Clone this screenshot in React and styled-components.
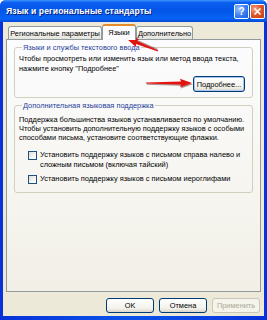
import React from "react";
import styled, { createGlobalStyle, css } from "styled-components";

const GlobalStyle = createGlobalStyle`
  html, body {
    margin: 0;
    padding: 0;
  }
  body {
    width: 267px;
    height: 320px;
    overflow: hidden;
    background: #fff;
    font-family: "Liberation Sans", Arial, sans-serif;
  }
`;

const Window = styled.div`
  position: relative;
  box-sizing: border-box;
  width: 267px;
  height: 320px;
  display: flex;
  flex-direction: column;
  padding: 0 3px 4px 3px;
  background: linear-gradient(90deg, #0831d9 0%, #0a4ee8 40%, #0a4ee8 60%, #0831d9 100%);
  border-radius: 6px 6px 0 0;
`;

const TitleBar = styled.div`
  height: 22px;
  margin: 0 -3px;
  padding: 0 2px 0 6px;
  display: flex;
  align-items: center;
  border-radius: 6px 6px 0 0;
  background: linear-gradient(
    180deg,
    #3d95ff 0%,
    #0a5ef0 12%,
    #0355e6 45%,
    #0663f5 85%,
    #0548d8 100%
  );
`;

const Title = styled.div`
  flex: 1;
  color: #fff;
  font-weight: bold;
  font-size: 8.6px;
  letter-spacing: 0.1px;
  text-shadow: 1px 1px 0 #0a1f7a;
  white-space: nowrap;
`;

const TitleButtons = styled.div`
  display: flex;
  gap: 1px;
`;

const TitleButton = styled.div`
  width: 15px;
  height: 15px;
  box-sizing: border-box;
  border: 1px solid #fff;
  border-radius: 2px;
  display: flex;
  align-items: center;
  justify-content: center;
  color: #fff;
  font-weight: bold;
  font-size: 10px;
  ${(p) =>
    p.$close
      ? css`
          background: radial-gradient(circle at 30% 30%, #f3a78a 0%, #e0592e 45%, #c43a10 100%);
        `
      : css`
          background: radial-gradient(circle at 30% 30%, #9fc3ff 0%, #3f82f5 50%, #1656d8 100%);
        `}
`;

const Body = styled.div`
  flex: 1;
  display: flex;
  flex-direction: column;
  background: #ece9d8;
  padding-top: 2px;
`;

const TabRow = styled.div`
  display: flex;
  align-items: flex-end;
  height: 15px;
  padding-left: 5px;
`;

const Tab = styled.div`
  box-sizing: border-box;
  width: ${(p) => p.$w}px;
  height: 13px;
  display: flex;
  align-items: center;
  justify-content: center;
  font-size: 7.4px;
  color: #000;
  white-space: nowrap;
  border: 1px solid #919b9c;
  border-bottom: none;
  border-radius: 3px 3px 0 0;
  background: linear-gradient(180deg, #ffffff 0%, #f3f3ef 60%, #e3e2da 100%);
  ${(p) =>
    p.$active &&
    css`
      position: relative;
      z-index: 1;
      height: 16px;
      margin-bottom: -1px;
      border-top: 2px solid #e68b2c;
      background: #fcfcfe;
      padding-bottom: 1px;
    `}
`;

const Panel = styled.div`
  flex: 1;
  margin: 0 3px;
  border: 1px solid #919b9c;
  background: linear-gradient(180deg, #fcfcfe 0%, #f6f5f0 60%, #f1efe6 100%);
  padding: 3px 7px 0 7px;
  display: flex;
  flex-direction: column;
  gap: 3px;
`;

const Group = styled.fieldset`
  margin: 0;
  border: 1px solid #d0d0bf;
  border-radius: 3px;
  padding: ${(p) => p.$pad};
  display: flex;
  flex-direction: column;
`;

const Legend = styled.legend`
  font-size: 7.4px;
  line-height: 9px;
  color: #1f3f9a;
  padding: 0 1px;
  margin-left: 3px;
`;

const Text = styled.div`
  font-size: 7.4px;
  line-height: ${(p) => p.$lh || 9.5}px;
  color: #000;
`;

const ButtonRow = styled.div`
  display: flex;
  justify-content: flex-end;
  margin-top: ${(p) => p.$mt || 0}px;
`;

const Button = styled.div`
  box-sizing: border-box;
  width: ${(p) => p.$w || 48}px;
  height: ${(p) => p.$h || 15}px;
  display: flex;
  align-items: center;
  justify-content: center;
  font-size: 7.4px;
  color: #000;
  border: 1px solid #003c74;
  border-radius: 3px;
  background: linear-gradient(180deg, #ffffff 0%, #f3f2ec 70%, #dcd8cc 100%);
  ${(p) =>
    p.$focus &&
    css`
      box-shadow: inset 0 0 0 1px #a9c6f5;
    `}
  ${(p) =>
    p.$disabled &&
    css`
      color: #aca899;
      border-color: #c9c7ba;
      background: #f5f4ea;
    `}
`;

const CheckRow = styled.div`
  display: flex;
  align-items: flex-start;
  gap: 3px;
  padding-left: 9px;
  margin-top: ${(p) => p.$mt}px;
`;

const CheckBox = styled.div`
  flex: none;
  box-sizing: border-box;
  width: 9px;
  height: 9px;
  margin-top: 0.5px;
  border: 1px solid #1c5180;
  background: linear-gradient(135deg, #dcdcd7 0%, #f5f5f2 60%, #ffffff 100%);
`;

const Footer = styled.div`
  display: flex;
  justify-content: flex-end;
  gap: 5px;
  padding: 6px 4px 3px 0;
`;

const Overlay = styled.svg`
  position: absolute;
  left: 0;
  top: 0;
  pointer-events: none;
`;

const Arrow = ({ x, y, angle, len }) => {
  const h = len - 12;
  const pts = `0,-0.6 ${h + 1},-1.6 ${h},-4.3 ${len},0 ${h},4.3 ${h + 1},1.6 0,0.6`;
  return (
    <g transform={`translate(${x} ${y}) rotate(${angle})`}>
      <polygon points={pts} fill="#5a0a0a" opacity="0.45" transform="translate(0.8 1.2)" />
      <polygon points={pts} fill="#e3140f" />
    </g>
  );
};

export default function App() {
  return (
    <>
      <GlobalStyle />
      <Window>
        <TitleBar>
          <Title>Язык и региональные стандарты</Title>
          <TitleButtons>
            <TitleButton>?</TitleButton>
            <TitleButton $close>
              <svg width="9" height="9" viewBox="0 0 9 9">
                <path d="M1.5 1.5 L7.5 7.5 M7.5 1.5 L1.5 7.5" stroke="#fff" strokeWidth="1.6" />
              </svg>
            </TitleButton>
          </TitleButtons>
        </TitleBar>
        <Body>
          <TabRow>
            <Tab $w={94}>Региональные параметры</Tab>
            <Tab $w={34} $active>Языки</Tab>
            <Tab $w={57}>Дополнительно</Tab>
          </TabRow>
          <Panel>
            <Group $pad="2px 7px 5px 4px">
              <Legend>Языки и службы текстового ввода</Legend>
              <Text>Чтобы просмотреть или изменить язык или метод ввода текста,</Text>
              <Text>нажмите кнопку "Подробнее"</Text>
              <ButtonRow $mt={3}>
                <Button $w={52} $h={16} $focus>Подробнее...</Button>
              </ButtonRow>
            </Group>
            <Group $pad="5px 7px 8px 4px">
              <Legend>Дополнительная языковая поддержка</Legend>
              <Text $lh={9}>
                Поддержка большинства языков устанавливается по умолчанию.
                <br />
                Чтобы установить дополнительную поддержку языков с особыми
                <br />
                способами письма, установите соответствующие флажки.
              </Text>
              <CheckRow $mt={8}>
                <CheckBox />
                <Text $lh={10}>
                  Установить поддержку языков с письмом справа налево и
                  <br />
                  сложным письмом (включая тайский)
                </Text>
              </CheckRow>
              <CheckRow $mt={4}>
                <CheckBox />
                <Text $lh={10}>Установить поддержку языков с письмом иероглифами</Text>
              </CheckRow>
            </Group>
          </Panel>
          <Footer>
            <Button>OK</Button>
            <Button>Отмена</Button>
            <Button $disabled>Применить</Button>
          </Footer>
        </Body>
        <Overlay width="267" height="320" viewBox="0 0 267 320">
          <Arrow x={158} y={51} angle={201.5} len={34} />
          <Arrow x={146} y={83} angle={0} len={46} />
        </Overlay>
      </Window>
    </>
  );
}
